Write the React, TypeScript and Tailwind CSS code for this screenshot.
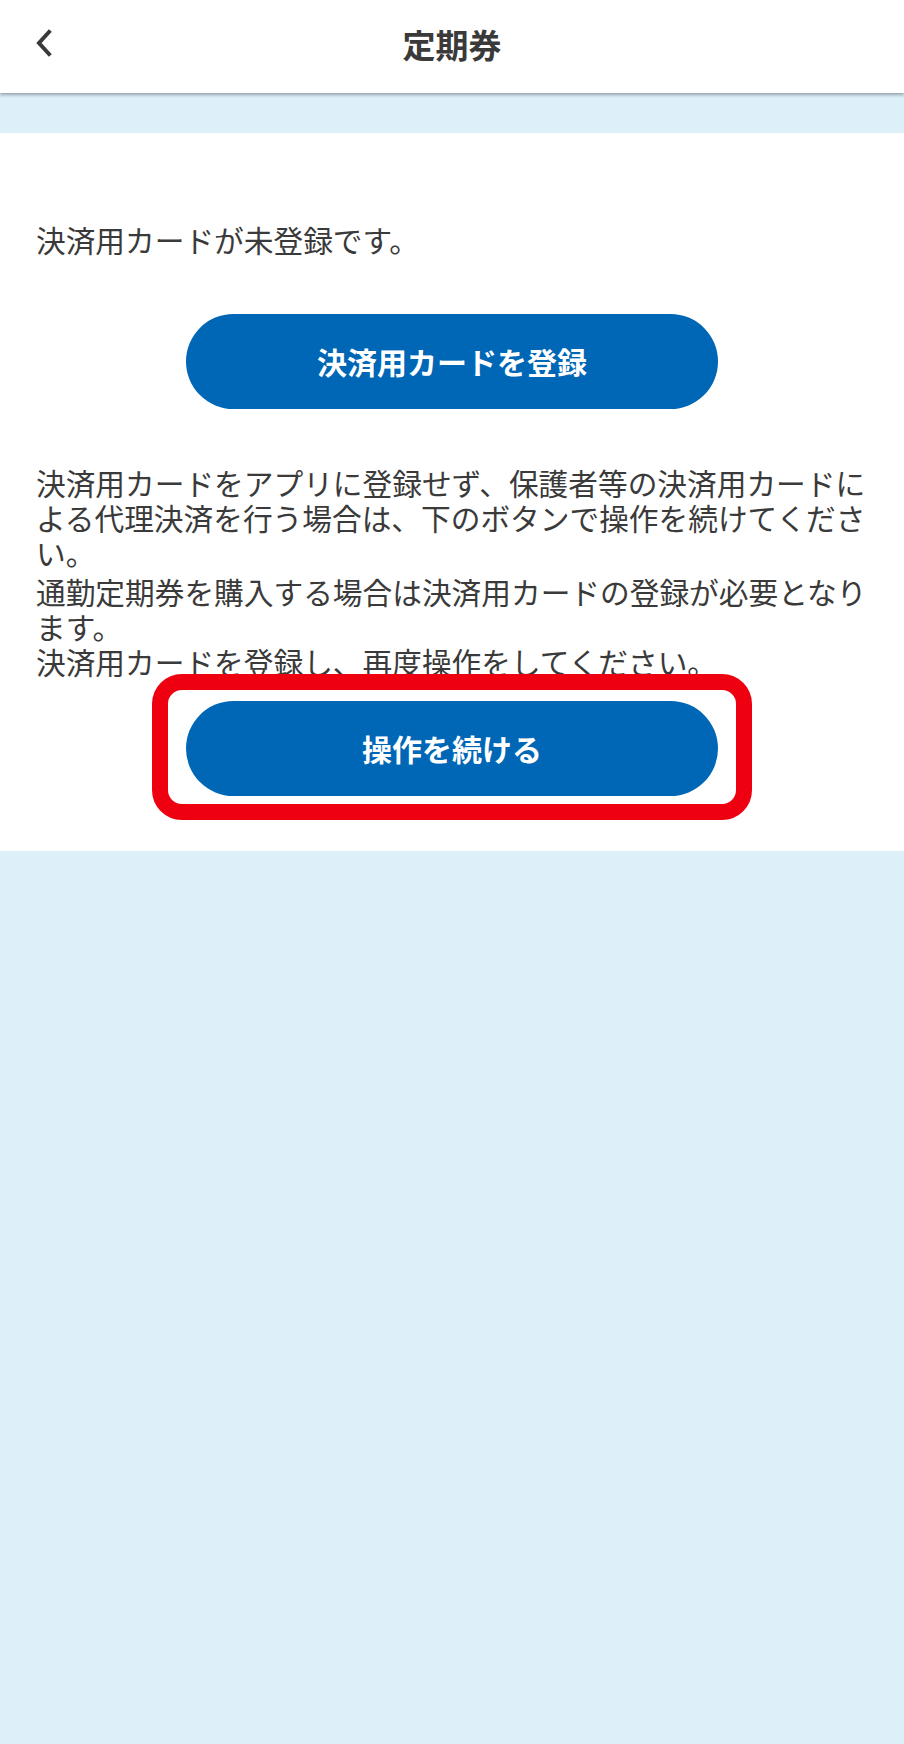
import React from "react";

export default function App() {
  return (
    <div
      className="min-h-[1744px] w-full bg-[#ddf0fa] text-[#3a3a3a]"
      style={{ fontFamily: '"Noto Sans CJK JP", "Noto Sans", sans-serif' }}
    >
      <header className="relative z-10 flex h-[93px] items-center justify-center bg-white shadow-[0_2px_3px_rgba(60,70,80,0.45)]">
        <button className="absolute left-[33px] top-[28px] flex h-[30px] w-[22px] items-center justify-center">
          <svg width="20" height="28" viewBox="0 0 20 28" fill="none">
            <path d="M15 3 L5 14 L15 25" stroke="#3a3a3a" strokeWidth="4" strokeLinecap="square" strokeLinejoin="miter" />
          </svg>
        </button>
        <h1 className="mt-[-5px] text-[33px] font-bold leading-none text-[#3a3a3a]">定期券</h1>
      </header>
      <div className="h-[40px]" />
      <main className="bg-white pb-[55px] pl-[36px] pr-[32px] pt-[89px]">
        <p className="text-[29.7px] leading-[35px]">決済用カードが未登録です。</p>
        <div className="mt-[57px] flex justify-center">
          <button className="ml-[-4px] flex h-[95px] w-[532px] items-center justify-center rounded-full bg-[#0066b6] text-[30px] font-bold text-white">
            決済用カードを登録
          </button>
        </div>
        <div className="mt-[56px] text-[29.7px] leading-[35px]">
          <p>決済用カードをアプリに登録せず、保護者等の決済用カードによる代理決済を行う場合は、下のボタンで操作を続けてください。</p>
          <p className="mt-[4px]">
            通勤定期券を購入する場合は決済用カードの登録が必要となります。
            <br />
            決済用カードを登録し、再度操作をしてください。
          </p>
        </div>
        <div className="mt-[22px] flex justify-center">
          <div className="relative ml-[-4px] w-[532px]">
            <div className="pointer-events-none absolute bottom-[-24px] left-[-34px] right-[-34px] top-[-27px] rounded-[30px] border-[16px] border-[#ee0010]" />
            <button className="relative flex h-[95px] w-[532px] items-center justify-center rounded-full bg-[#0066b6] text-[30px] font-bold text-white">
              操作を続ける
            </button>
          </div>
        </div>
      </main>
    </div>
  );
}
